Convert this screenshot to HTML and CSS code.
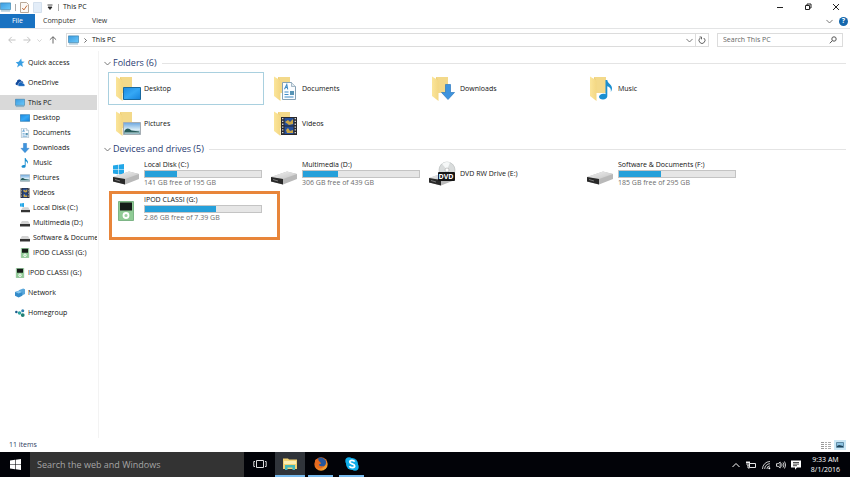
FILE: index.html
```html
<!DOCTYPE html>
<html lang="en">
<head>
  <meta charset="UTF-8">
  <meta name="viewport" content="width=device-width, initial-scale=1.0">
  <title>This PC</title>
  <link rel="stylesheet" href="styles.css">
</head>
<body>
  <!-- shared icons -->
  <svg class="sprite" aria-hidden="true">
    <defs>
      <linearGradient id="g-blue" x1="0" y1="0" x2="1" y2="1"><stop offset="0" stop-color="#1e8ae0"/><stop offset="0.5" stop-color="#35a8f5"/><stop offset="1" stop-color="#1583dc"/></linearGradient>
      <linearGradient id="g-screen" x1="0" y1="0" x2="1" y2="1"><stop offset="0" stop-color="#3c9be0"/><stop offset="1" stop-color="#6cc9fa"/></linearGradient>
      <linearGradient id="g-folder" x1="0" y1="0" x2="1" y2="0"><stop offset="0" stop-color="#fbe59a"/><stop offset="1" stop-color="#f3d783"/></linearGradient>
      <linearGradient id="g-drive" x1="0" y1="0" x2="1" y2="1"><stop offset="0" stop-color="#f1f1f1"/><stop offset="1" stop-color="#c4c4c4"/></linearGradient>
      <linearGradient id="g-sky" x1="0" y1="0" x2="0" y2="1"><stop offset="0" stop-color="#6aa5de"/><stop offset="0.6" stop-color="#d9edf7"/><stop offset="1" stop-color="#417f8c"/></linearGradient>
      <linearGradient id="g-fox" x1="0" y1="0" x2="1" y2="1"><stop offset="0" stop-color="#d5571c"/><stop offset="0.6" stop-color="#ee7f22"/><stop offset="1" stop-color="#fbc03c"/></linearGradient>
    </defs>
    <symbol id="pc" viewBox="0 0 12 10"><path d="M.5.5h11v7.3H.5z" fill="url(#g-screen)" stroke="#397da8" stroke-width=".7"/><path d="M1 9.3h10" stroke="#78a9c4" stroke-width="1"/></symbol>
    <symbol id="star" viewBox="0 0 10 10"><path d="M6.2.5l.5 2.9 3 .4-2.5 1.8.7 3.3-2.7-1.7L2.1 9.400l.9-3.2L.7 4.200l3-.4z" fill="#3a9fe3"/></symbol>
    <symbol id="cloud" viewBox="0 0 12 8"><path d="M1.600 6.500a2 2 0 01.6-3.600A3 3 0 018 1.800c1.300 0 2 .8 2 1.800L4 7z" fill="#124a9c"/><path d="M4.800 8a2 2 0 01-.2-3.600 2.300 2.300 0 014.200-.5 2 2 0 012 1.300A1.500 1.500 0 0111 8z" fill="#1765bb" stroke="#fff" stroke-width=".5"/></symbol>
    <symbol id="desk" viewBox="0 0 18 13"><path d="M.5.5h17v12H.5z" fill="url(#g-blue)" stroke="#19699f"/></symbol>
    <symbol id="doc" viewBox="0 0 14 18"><path d="M.5.5h9l4 4v13H.5z" fill="#fbfdff" stroke="#86a2b5"/><path d="M9.500.5v4h4" fill="#dfe8ee" stroke="#86a2b5" stroke-width=".7"/><path d="M2.500 7.300L4.800 2.500l.9 4.800M3.500 5.500h2M2.500 10h4M2.500 12.500h4M2.500 15h9" stroke="#408cc5" stroke-width="1.100" fill="none"/><path d="M8 9h4v4H8z" fill="#5794b5"/></symbol>
    <symbol id="down" viewBox="0 0 14 16"><path d="M4.500.5h5v8h4L7 15.500.5 8.500h4z" fill="#3e94de" stroke="#2c7ac0" stroke-width=".7"/></symbol>
    <symbol id="note" viewBox="0 0 14 20"><path d="M6.500 0h1.800c.2 3.500 5 4.600 4.700 8.600-.1 1.500-.7 2.700-1.200 3.400.7-3.500-1.300-5-3.500-5.700v10c0 2-1.900 3.200-4.300 3.200S0 18.300 0 16.800s2-3 4.300-3c.8 0 1.600.1 2.200.4z" fill="#1b8fd0"/></symbol>
    <symbol id="pic" viewBox="0 0 18 13"><path d="M.5.5h17v12H.5z" fill="url(#g-sky)" stroke="#a5adb3"/><path d="M1.500 9c2-3.500 4.500-3 7-.5l7.500 1v1.500h-14.500z" fill="#285c5b"/><path d="M1.500 11h15" stroke="#d2e8ee"/></symbol>
    <symbol id="film" viewBox="0 0 16 18"><path d="M0 0h16v18H0z" fill="#29292d"/><path d="M3.500 1h9v7.500h-9zM3.500 9.500h9V17h-9z" fill="#254f9c"/><path d="M4 5l3-2 2 2 3-3v5l-4 1zM5 13l2-2 2 3 3-1v3H6z" fill="#cba647"/><path d="M1.700 1v16M14.300 1v16" stroke="#d6d6d6" stroke-width="1.400" stroke-dasharray="1.300 1.500"/></symbol>
    <symbol id="folder" viewBox="0 0 17 25"><path d="M4 1h12v16H4z" fill="#edcd75"/><path d="M4 1h12v16H6V4z" fill="#f3d98a"/><path d="M0 .5l5 3 1.500 1.500V25L0 20z" fill="url(#g-folder)"/></symbol>
    <symbol id="drive" viewBox="0 0 28 14"><path d="M1 6L17 .5 27 3v5l-14 5.500L1 10.500z" fill="#b9b9b9"/><path d="M1 6L17 .5 27 3 13 8z" fill="url(#g-drive)"/><path d="M1 6l12 2v5.500L1 10.500z" fill="#292929"/><path d="M3 8.500l5 1.500" stroke="#777"/></symbol>
    <symbol id="windows" viewBox="0 0 11 11"><path d="M0 1.500L5 .8V5.200H0zM5.600.7L11 0v5.200H5.600zM0 5.800h5v4.400l-5-.7zM5.600 5.800H11V11l-5.400-.8z"/></symbol>
    <symbol id="mini-drive" viewBox="0 0 10 6"><path d="M2 0h6l2 3H0z" fill="#d4d4d4"/><path d="M0 3h10v2.500H0z" fill="#343434"/></symbol>
    <symbol id="ipod" viewBox="0 0 16 20"><path d="M.5.500h15v19H.5z" fill="#8fcb95" stroke="#7db586"/><path d="M2 1.500h12v8H2z" fill="#151c19"/><circle cx="8" cy="14.500" r="2.500" fill="#9bd0a0" stroke="#fff" stroke-width="1.800"/></symbol>
    <symbol id="network" viewBox="0 0 11 10"><path d="M4 2l5-2 2 1v5L7 8 4 7z" fill="#5ba7da"/><path d="M0 4l5-1.500L8 4v4L4 10 0 8z" fill="#348bc9"/><path d="M0 4l5-1.500L8 4 4 5.500z" fill="#84c6ef"/></symbol>
    <symbol id="home" viewBox="0 0 11 9"><circle cx="1.500" cy="3.500" r="1.400" fill="#1f5c8c"/><circle cx="5" cy="4.500" r="2" fill="#2da5a1"/><circle cx="8.500" cy="2" r="1.700" fill="#2e7eb0"/><circle cx="8.500" cy="6.800" r="2.100" fill="#1f8074"/></symbol>
    <symbol id="chev" viewBox="0 0 8 5"><path d="M.5.7L4 4.200 7.500.7" fill="none" stroke="currentColor"/></symbol>
    <symbol id="arrow" viewBox="0 0 9 9"><path d="M8.500 4.500H1M4.200 1L.8 4.500 4.200 8" fill="none" stroke="currentColor"/></symbol>
  </svg>

  <div class="window">
    <header class="titlebar">
      <svg class="i-pc"><use href="#pc"/></svg>
      <span class="sep"></span>
      <button class="tool" aria-label="Properties"><svg class="i-page" viewBox="0 0 9 11"><path d="M.5.5h6l2 2v8h-8z" fill="#fcf9f6" stroke="#b9a999"/><path d="M2.300 6l1.500 2L7 3.500" fill="none" stroke="#c5703e"/></svg></button>
      <button class="tool" aria-label="New folder"><svg class="i-page" viewBox="0 0 9 11"><path d="M.5.5h8v10h-8z" fill="#e3edf8" stroke="#d4e0ed"/></svg></button>
      <button class="tool" aria-label="Customize toolbar"><svg class="i-small" viewBox="0 0 6 6"><path d="M.5 1h5M1 3h4L3 5.500z" fill="#222" stroke="#222" stroke-width=".8"/></svg></button>
      <span class="sep"></span>
      <h1>This PC</h1>
      <div class="window-buttons">
        <button aria-label="Minimize"><svg class="i-win" viewBox="0 0 8 8"><path d="M1 4.500h6" stroke="#222"/></svg></button>
        <button aria-label="Restore"><svg class="i-win" viewBox="0 0 8 8"><path d="M1.500 2.500h4v4h-4zM3 2.500V1h4v4H5.500" fill="none" stroke="#222"/></svg></button>
        <button aria-label="Close"><svg class="i-win" viewBox="0 0 8 8"><path d="M1 1l6 6M7 1L1 7" stroke="#222"/></svg></button>
      </div>
    </header>

    <nav class="ribbon">
      <button class="tab file">File</button>
      <button class="tab">Computer</button>
      <button class="tab">View</button>
      <div class="ribbon-right">
        <button aria-label="Expand ribbon"><svg class="i-chev"><use href="#chev"/></svg></button>
        <button class="help" aria-label="Help">?</button>
      </div>
    </nav>

    <div class="address-row">
      <div class="nav-buttons">
        <button class="pale" aria-label="Back"><svg class="i-arrow"><use href="#arrow"/></svg></button>
        <button class="pale" aria-label="Forward"><svg class="i-arrow forward"><use href="#arrow"/></svg></button>
        <button class="pale recent" aria-label="Recent locations"><svg class="i-tiny"><use href="#chev"/></svg></button>
        <button aria-label="Up"><svg class="i-arrow up"><use href="#arrow"/></svg></button>
      </div>
      <div class="address">
        <svg class="i-pc"><use href="#pc"/></svg>
        <svg class="i-tiny crumb"><use href="#chev"/></svg>
        <button class="crumb-name">This PC</button>
        <button class="drop" aria-label="Previous locations"><svg class="i-chev"><use href="#chev"/></svg></button>
        <button class="refresh" aria-label="Refresh"><svg class="i-win" viewBox="0 0 8 8"><path d="M2.200 2A3 3 0 105.800 2M1.500 1h2v2.300" fill="none" stroke="#666"/></svg></button>
      </div>
      <div class="search">
        <input type="text" aria-label="Search This PC" placeholder="Search This PC">
        <svg class="i-win" viewBox="0 0 8 8"><circle cx="5" cy="3" r="2.200" fill="none" stroke="#555"/><path d="M3.300 4.700L.8 7.300" stroke="#555"/></svg>
      </div>
    </div>

    <div class="main">
      <nav class="sidebar">
        <a href="#"><svg><use href="#star"/></svg>Quick access</a>
        <a href="#"><svg><use href="#cloud"/></svg>OneDrive</a>
        <div class="tree">
          <a href="#" class="active"><svg><use href="#pc"/></svg>This PC</a>
          <a href="#" class="child"><svg><use href="#desk"/></svg>Desktop</a>
          <a href="#" class="child"><svg><use href="#doc"/></svg>Documents</a>
          <a href="#" class="child"><svg><use href="#down"/></svg>Downloads</a>
          <a href="#" class="child"><svg><use href="#note"/></svg>Music</a>
          <a href="#" class="child"><svg><use href="#pic"/></svg>Pictures</a>
          <a href="#" class="child"><svg><use href="#film"/></svg>Videos</a>
          <a href="#" class="child"><svg viewBox="0 0 10 10"><use href="#windows" width="4" height="4" fill="#22a7e8"/><use href="#mini-drive" y="4" x="1" width="9" height="6"/></svg>Local Disk (C:)</a>
          <a href="#" class="child"><svg viewBox="0 0 10 10"><use href="#mini-drive" y="3" width="10" height="6"/></svg>Multimedia (D:)</a>
          <a href="#" class="child"><svg viewBox="0 0 10 10"><use href="#mini-drive" y="3" width="10" height="6"/></svg>Software &amp; Documents (F:)</a>
          <a href="#" class="child"><svg><use href="#ipod"/></svg>IPOD CLASSI (G:)</a>
        </div>
        <a href="#"><svg><use href="#ipod"/></svg>IPOD CLASSI (G:)</a>
        <a href="#"><svg><use href="#network"/></svg>Network</a>
        <a href="#"><svg><use href="#home"/></svg>Homegroup</a>
      </nav>

      <main class="content">
        <section>
          <h2><svg class="i-chev"><use href="#chev"/></svg>Folders (6)</h2>
          <div class="tiles folders">
            <a href="#" class="tile selected"><svg class="big" viewBox="0 0 26 26"><use href="#folder" width="17" height="25"/><use href="#desk" x="7" y="11" width="18" height="13"/></svg>Desktop</a>
            <a href="#" class="tile"><svg class="big" viewBox="0 0 26 26"><use href="#folder" width="17" height="25"/><use href="#doc" x="8" y="6" width="14" height="18"/></svg>Documents</a>
            <a href="#" class="tile"><svg class="big" viewBox="0 0 26 26"><use href="#folder" width="17" height="25"/><use href="#down" x="9" y="8" width="14" height="16"/></svg>Downloads</a>
            <a href="#" class="tile"><svg class="big" viewBox="0 0 26 26"><use href="#folder" width="17" height="25"/><use href="#note" x="9" y="4" width="14" height="20"/></svg>Music</a>
            <a href="#" class="tile"><svg class="big" viewBox="0 0 26 26"><use href="#folder" width="17" height="25"/><use href="#pic" x="7" y="11" width="18" height="13"/></svg>Pictures</a>
            <a href="#" class="tile"><svg class="big" viewBox="0 0 26 26"><use href="#folder" width="17" height="25"/><use href="#film" x="7" y="6" width="16" height="18"/></svg>Videos</a>
          </div>
        </section>

        <section>
          <h2><svg class="i-chev"><use href="#chev"/></svg>Devices and drives (5)</h2>
          <div class="tiles">
            <a href="#" class="tile drive">
              <svg class="big" viewBox="0 0 28 26"><use href="#windows" x="1" y="3" width="11" height="11" fill="#22a7e8"/><use href="#drive" y="10" width="28" height="14"/></svg>
              <span class="info"><span>Local Disk (C:)</span><span class="bar"><span class="fill" style="width: 28%"></span></span><span class="free">141 GB free of 195 GB</span></span>
            </a>
            <a href="#" class="tile drive">
              <svg class="big" viewBox="0 0 28 26"><use href="#drive" y="10" width="28" height="14"/></svg>
              <span class="info"><span>Multimedia (D:)</span><span class="bar"><span class="fill" style="width: 30%"></span></span><span class="free">306 GB free of 439 GB</span></span>
            </a>
            <a href="#" class="tile drive">
              <svg class="big" viewBox="0 0 28 26"><use href="#drive" y="11" width="28" height="14"/><circle cx="19" cy="9" r="8" fill="#d9dcdc" stroke="#b4b8b8" stroke-width=".6"/><path d="M19 9L14 2.800A8 8 0 0122 1.600z" fill="#f6f8f8"/><circle cx="19" cy="9" r="2" fill="#fff" stroke="#a8a8a8" stroke-width=".6"/><rect x="10" y="11" width="17" height="9" rx="1" fill="#161616"/><text x="18" y="18" class="dvd">DVD</text></svg>
              <span class="info"><span>DVD RW Drive (E:)</span></span>
            </a>
            <a href="#" class="tile drive">
              <svg class="big" viewBox="0 0 28 26"><use href="#drive" y="10" width="28" height="14"/></svg>
              <span class="info"><span>Software &amp; Documents (F:)</span><span class="bar"><span class="fill" style="width: 36%"></span></span><span class="free">185 GB free of 295 GB</span></span>
            </a>
            <a href="#" class="tile drive marked">
              <svg class="big" viewBox="0 0 28 26"><use href="#ipod" x="5" y="5" width="18" height="20"/></svg>
              <span class="info"><span>IPOD CLASSI (G:)</span><span class="bar"><span class="fill" style="width: 61%"></span></span><span class="free">2.86 GB free of 7.39 GB</span></span>
            </a>
          </div>
        </section>
      </main>
    </div>

    <footer class="statusbar">
      <span>11 items</span>
      <div class="views">
        <button aria-label="Details view"><svg class="i-view" viewBox="0 0 10 8"><path d="M0 1.500h3M0 3.500h3M0 5.500h3M0 7.500h3" stroke="#999"/><path d="M4 1.500h2M4 3.500h2M4 5.500h2M4 7.500h2M7 1.500h3M7 3.500h3M7 5.500h3M7 7.500h3" stroke="#aaa"/></svg></button>
        <button class="on" aria-label="Large icons view"><svg class="i-view" viewBox="0 0 10 8"><path d="M1.500 1.500h7v5h-7z" fill="#8dc3e2" stroke="#5f8ba5"/><path d="M2 5l2-1 4 1v1H2z" fill="#1d4258"/></svg></button>
      </div>
    </footer>
  </div>

  <div class="taskbar">
    <button class="start" aria-label="Start"><svg class="i-start"><use href="#windows"/></svg></button>
    <input class="cortana" type="text" aria-label="Search the web and Windows" placeholder="Search the web and Windows">
    <button class="task" aria-label="Task view"><svg class="i-app" viewBox="0 0 14 14"><path d="M3.500 3.500h7v7h-7zM2 4.500H.8v5H2M12 4.500h1.200v5H12" fill="none" stroke="#ddd"/></svg></button>
    <button class="task running current" aria-label="File Explorer"><svg class="i-app" viewBox="0 0 14 14"><path d="M0 1.500h5l1 1h8V12H0z" fill="#f3d273"/><path d="M1 4h12v3H1z" fill="#fbeeb3"/><path d="M2 13V8h10v5h-2.500v-2.500h-5V13z" fill="#43b7ba"/></svg></button>
    <button class="task running" aria-label="Firefox"><svg class="i-app" viewBox="0 0 14 14"><circle cx="7" cy="7" r="6.700" fill="url(#g-fox)"/><path d="M4 1.200a6.300 6.300 0 017.500 2c1 2 .5 5-1.500 6C7.500 10.500 5 9.200 4.500 7.500L7 6.500 5 5z" fill="#27579c"/><path d="M1 3.500L2.500 2l.8 1.500L6 4.800 7 6.500 4.500 7.500c.6 2 3.300 2.700 5.200 1.200-.8 2.600-4.300 3.600-6.500 1.500z" fill="#e66a20"/></svg></button>
    <button class="task running" aria-label="Skype"><svg class="i-app" viewBox="0 0 14 14"><circle cx="7" cy="7" r="6" fill="#0faeea"/><circle cx="4" cy="4" r="3.700" fill="#0faeea"/><circle cx="10" cy="10" r="3.700" fill="#0faeea"/><path d="M9.700 4.600C8.500 2.800 4.700 3 4.700 5c0 2.300 5 1.400 5 3.900 0 2-4 2.300-5.300.3" fill="none" stroke="#fff" stroke-width="1.700"/></svg></button>
    <div class="tray">
      <svg class="i-tray" viewBox="0 0 10 10"><path d="M1.500 7L5 3.500 8.500 7" fill="none" stroke="#fff"/></svg>
      <svg class="i-tray" viewBox="0 0 10 10"><path d="M3.500 3.500h6v4h-6zM0 2.500h4M1 1v3.500c0 1 2 1 2 0V1M2 5v3h1.500" fill="none" stroke="#fff" stroke-width=".9"/></svg>
      <svg class="i-tray" viewBox="0 0 10 10"><path d="M1.500 9A7.500 7.500 0 019 1.500M3.700 9A5.300 5.300 0 019 3.700M5.900 9A3.100 3.100 0 019 5.900" fill="none" stroke="#ddd" stroke-width=".9"/><circle cx="8.300" cy="8.300" r="1" fill="#fff"/></svg>
      <svg class="i-tray" viewBox="0 0 10 10"><path d="M.5 3.700h1.700L4.200 2v6L2.200 6.300H.5zM5.500 3.500q1.200 1.500 0 3M7 2.500q2 2.500 0 5M8.500 1.500q2.500 3.500 0 7" fill="none" stroke="#fff" stroke-width=".8"/></svg>
      <svg class="i-tray" viewBox="0 0 10 10"><path d="M0 .5h10v7H6L4 9.800V7.500H0z" fill="#fff"/><path d="M2 2.500h6M2 4.100h6M2 5.700h4" stroke="#222" stroke-width=".8"/></svg>
      <div class="clock"><span>9:33 AM</span><span>8/1/2016</span></div>
    </div>
  </div>
</body>
</html>
```

FILE: styles.css
```css
*,
*::after {
  box-sizing: border-box;
}
body {
  display: flex;
  flex-direction: column;
  min-height: 100vh;
  margin: 0;
  font-family: "Open Sans", "Noto Sans", sans-serif;
  font-size: 7px;
  line-height: 10px;
  color: #111;
  background-color: #fff;
}
button,
input {
  font: inherit;
  color: inherit;
  border: 0;
  margin: 0;
  padding: 0;
  background: none;
}
button {
  display: flex;
  align-items: center;
  justify-content: center;
}
a {
  color: inherit;
  text-decoration: none;
}
h1,
h2 {
  margin: 0;
  font-weight: normal;
}
svg {
  display: block;
  flex: none;
}
.sprite {
  position: absolute;
  width: 0;
  height: 0;
}

/* icon sizes */
.i-pc { width: 11px; height: 10px; }
.i-page { width: 9px; height: 11px; }
.i-small { width: 6px; height: 6px; }
.i-win { width: 8px; height: 8px; }
.i-chev { width: 7px; height: 5px; color: #666; }
.i-tiny { width: 5px; height: 3px; }
.i-arrow { width: 8px; height: 8px; }
.i-view { width: 10px; height: 8px; }
.i-start { width: 11px; height: 11px; fill: #fff; }
.i-app { width: 14px; height: 14px; }
.i-tray { width: 10px; height: 10px; }
.forward { transform: rotate(180deg); }
.up { transform: rotate(90deg); }

.window {
  flex: 1;
  display: flex;
  flex-direction: column;
}
.titlebar {
  display: flex;
  align-items: center;
  gap: 4px;
  height: 14px;
}
.titlebar h1 {
  font-size: 7px;
}
.sep {
  width: 1px;
  height: 7px;
  background-color: #aaa;
}
.tool {
  min-width: 8px;
}
.window-buttons {
  display: flex;
  margin-left: auto;
}
.window-buttons button {
  width: 28px;
  height: 14px;
}

.ribbon {
  display: flex;
  align-items: center;
  height: 15px;
  border-bottom: 1px solid #e3e4e5;
  color: #333;
}
.tab {
  height: 14px;
  padding: 0 8px;
}
.tab.file {
  width: 35px;
  color: #fff;
  background-color: #1972c1;
}
.ribbon-right {
  display: flex;
  align-items: center;
  gap: 6px;
  margin-left: auto;
  padding-right: 2px;
}
.help {
  width: 9px;
  height: 9px;
  border-radius: 50%;
  font-weight: bold;
  color: #fff;
  background-color: #1467ad;
}

.address-row {
  display: flex;
  align-items: center;
  gap: 8px;
  height: 22px;
  padding: 0 7px 0 8px;
}
.nav-buttons {
  display: flex;
  align-items: center;
  justify-content: space-between;
  width: 50px;
  padding-right: 1px;
  color: #555;
}
.pale {
  color: #bbb;
}
.address {
  flex: 1;
  display: flex;
  align-items: center;
  height: 14px;
  padding-left: 1px;
  border: 1px solid #dcdcdc;
}
.crumb {
  margin: 0 4px;
  transform: rotate(-90deg);
}
.crumb-name {
  height: 12px;
}
.drop {
  width: 12px;
  margin-left: auto;
}
.refresh {
  width: 13px;
  height: 12px;
  border-left: 1px solid #dcdcdc;
}
.search {
  display: flex;
  align-items: center;
  width: 126px;
  height: 14px;
  padding: 0 5px;
  border: 1px solid #dcdcdc;
}
.search input {
  flex: 1;
  min-width: 0;
}
input::placeholder {
  color: #666;
  opacity: 1;
}

.main {
  flex: 1;
  display: flex;
}
.sidebar {
  display: flex;
  flex-direction: column;
  gap: 5px;
  width: 99px;
  padding: 4px 1px 0 0;
  border-right: 1px solid #f3f3f3;
}
.sidebar a {
  display: flex;
  align-items: center;
  gap: 3px;
  height: 15px;
  padding-left: 15px;
  white-space: nowrap;
  overflow: hidden;
}
.sidebar a.child {
  padding-left: 20px;
}
.sidebar a.active {
  background-color: #d9d9d9;
}
.sidebar svg {
  width: 10px;
  height: 10px;
}

.content {
  flex: 1;
  padding: 5px 4px 0 5px;
}
h2 {
  display: flex;
  align-items: center;
  gap: 2px;
  height: 14px;
  font-size: 9px;
  color: #2b3c72;
}
h2::after {
  content: "";
  flex: 1;
  height: 1px;
  margin-left: 3px;
  background-color: #e4e4e4;
}
.tiles {
  display: grid;
  grid-template-columns: repeat(auto-fill, 156px);
  gap: 2px;
  padding: 1px 0 0 4px;
}
.tiles.folders {
  padding: 2px 0 2px 4px;
}
.tile {
  display: flex;
  align-items: center;
  gap: 2px;
  height: 33px;
  padding-left: 7px;
  border: 1px solid transparent;
}
.tile.selected {
  border-color: #a9d0df;
}
.tile.drive {
  gap: 4px;
  padding-left: 3px;
}
.big {
  width: 26px;
  height: 26px;
}
.drive .big {
  width: 28px;
}
.dvd {
  font-size: 7px;
  font-weight: bold;
  text-anchor: middle;
  fill: #fff;
}
.info {
  display: flex;
  flex-direction: column;
  white-space: nowrap;
}
.bar {
  width: 118px;
  height: 8px;
  border: 1px solid #c4c4c4;
  background-color: #e6e6e6;
}
.fill {
  display: block;
  height: 100%;
  background-color: #26a0da;
}
.free {
  color: #6d6d6d;
}
.marked {
  position: relative;
}
/* highlight frame drawn over the tile */
.marked::after {
  content: "";
  position: absolute;
  top: -2px;
  left: 0;
  width: 171px;
  height: 49px;
  border: 3px solid #e8853a;
}

.statusbar {
  display: flex;
  align-items: center;
  justify-content: space-between;
  height: 14px;
  padding: 0 4px 0 9px;
  color: #2b3c60;
}
.views {
  display: flex;
  gap: 2px;
}
.views button {
  width: 12px;
  height: 10px;
}
.views .on {
  background-color: #cce8f6;
}

.taskbar {
  display: flex;
  height: 25px;
  color: #fff;
  background-color: #020308;
}
.start {
  width: 30px;
}
.cortana {
  width: 214px;
  padding: 0 7px;
  font-size: 9px;
  background-color: #333;
}
.cortana::placeholder {
  color: #a5a5a5;
}
.task {
  width: 31px;
  border-bottom: 2px solid transparent;
}
.task.running {
  width: 25px;
  margin-right: 6px;
  border-bottom-color: #76b9ed;
}
.task.current {
  width: 30px;
  margin-right: 3px;
  background-color: #30343a;
}
.tray {
  display: flex;
  align-items: center;
  gap: 5px;
  margin-left: auto;
  padding-right: 10px;
}
.clock {
  display: flex;
  flex-direction: column;
  align-items: center;
  margin-left: 5px;
}
```
